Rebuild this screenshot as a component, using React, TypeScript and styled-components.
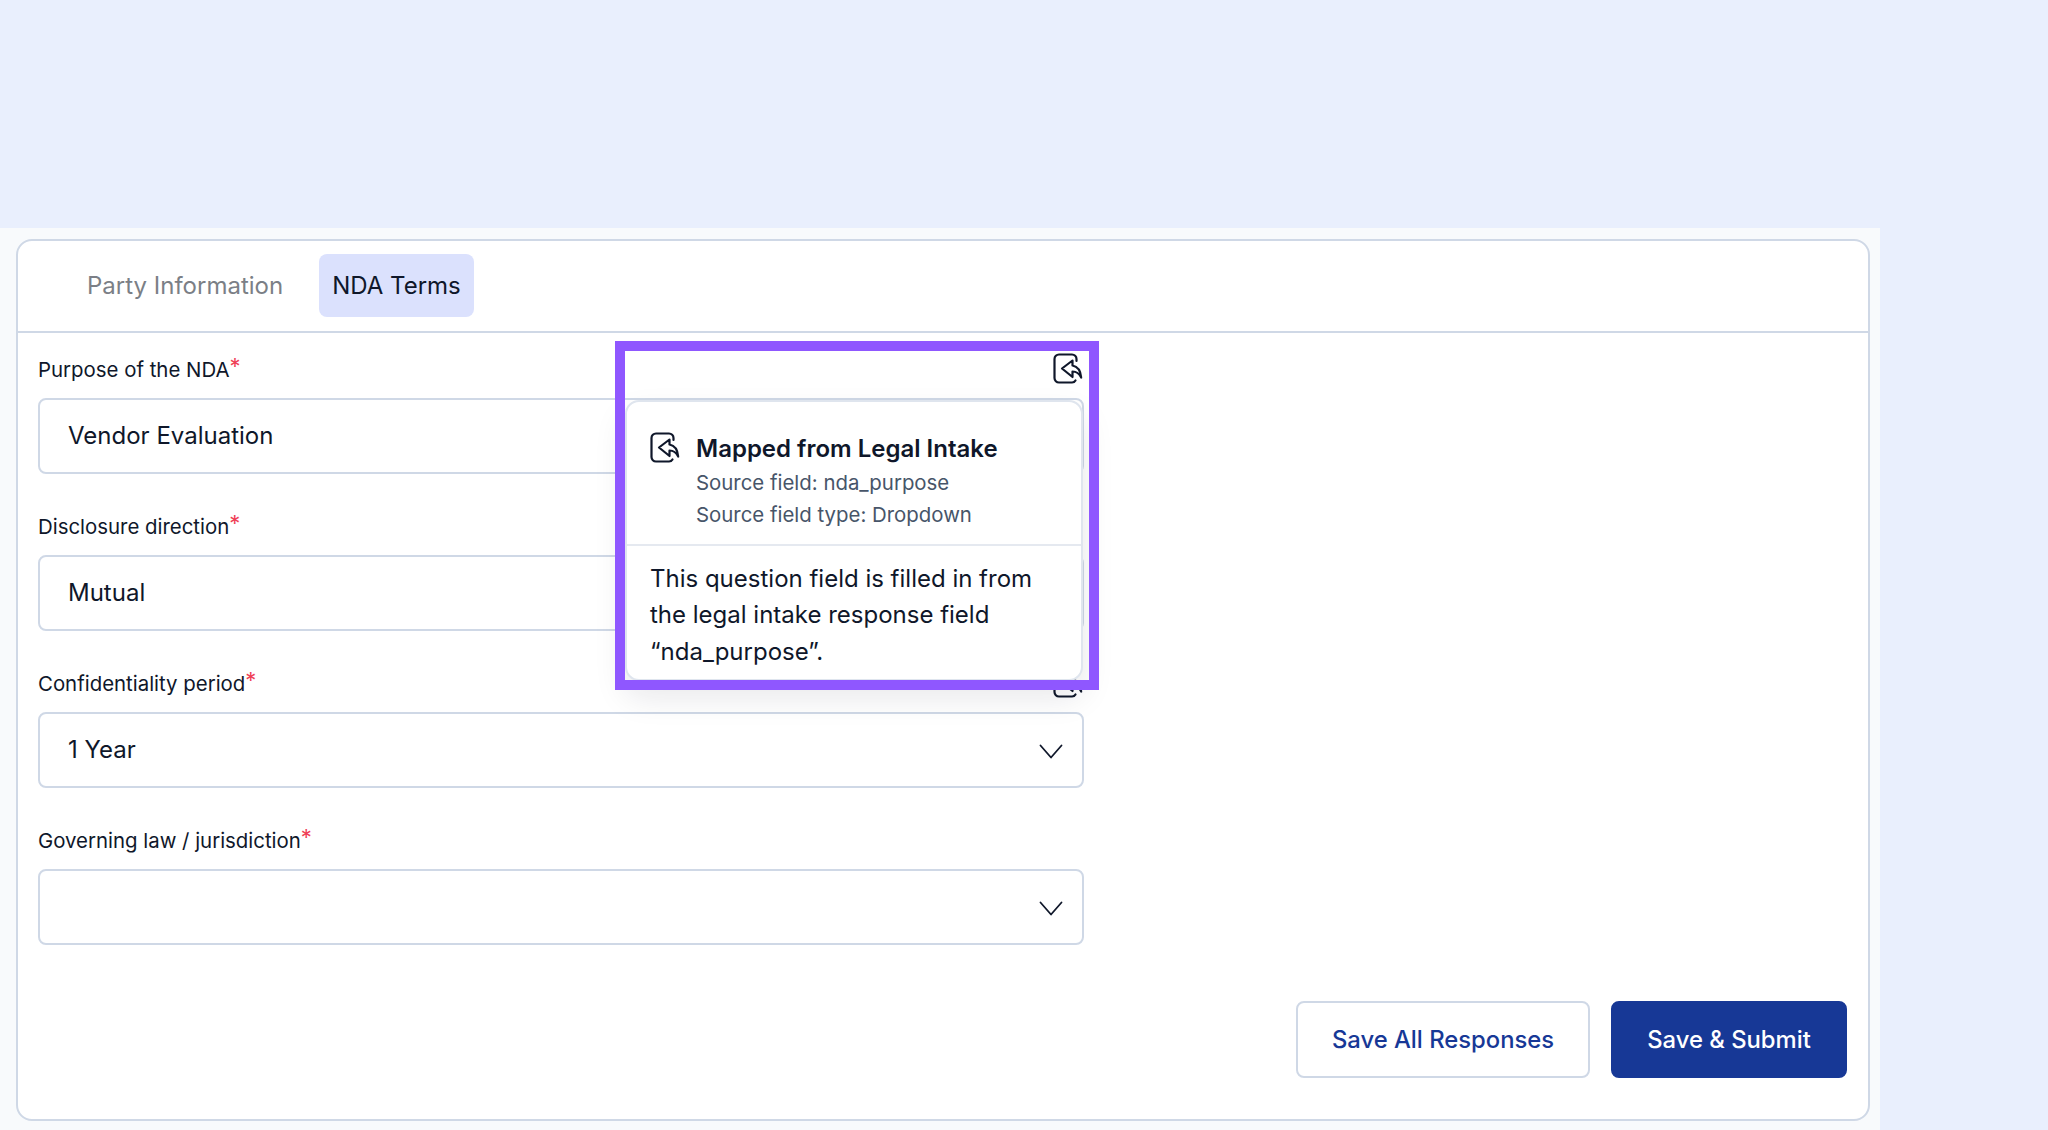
import * as React from 'react';
import styled, { createGlobalStyle } from 'styled-components';

const GlobalStyle = createGlobalStyle`
  html, body {
    margin: 0;
    padding: 0;
    background: #e9effd;
    font-family: Inter, 'Noto Sans', sans-serif;
    color: #0f172a;
  }
  * {
    box-sizing: border-box;
  }
`;

const Page = styled.div`
  width: 2048px;
  height: 1130px;
  overflow: hidden;
  padding-top: 228px;
`;

const Main = styled.div`
  width: 1880px;
  height: 902px;
  background: #f8fafc;
  padding: 11px 10px 10px 16px;
`;

const Card = styled.div`
  height: 882px;
  background: #fff;
  border: 2px solid #cfd8e6;
  border-radius: 16px;
`;

const TabBar = styled.div`
  display: flex;
  gap: 22px;
  height: 92px;
  padding: 13px 0 0 55.5px;
  border-bottom: 2px solid #cfd8e6;
`;

const Tab = styled.div<{ $active?: boolean }>`
  height: 63px;
  padding: 0 13.5px;
  display: flex;
  align-items: center;
  font-size: 24px;
  border-radius: 8px;
  color: ${(p) => (p.$active ? '#0f172a' : '#7b7f86')};
  background: ${(p) => (p.$active ? '#dbe1fd' : 'transparent')};
`;

const Form = styled.div`
  padding: 20px 21px 0 20px;
`;

const Fields = styled.div`
  width: 1046px;
  display: flex;
  flex-direction: column;
  gap: 36px;
`;

const Field = styled.div`
  position: relative;
`;

const LabelRow = styled.div`
  height: 31px;
  display: flex;
  justify-content: space-between;
  align-items: center;
  margin-bottom: 14px;
`;

const Label = styled.div`
  font-size: 20.4px;
  padding-top: 1px;
  color: #0f172a;
`;

const Star = styled.span`
  color: #ef3f56;
  font-size: 22px;
  position: relative;
  top: -3px;
`;

const Select = styled.div`
  height: 76px;
  display: flex;
  align-items: center;
  padding: 0 19px 0 28px;
  border: 2px solid #cfd8e6;
  border-radius: 8px;
  font-size: 24px;
  color: #0f172a;
`;

const SelectValue = styled.span`
  flex: 1;
  margin-top: -2px;
`;

const ChevronSlot = styled.span`
  display: flex;
  margin-top: 3px;
`;

const Popover = styled.div`
  position: absolute;
  z-index: 2;
  top: 47px;
  left: 587px;
  width: 458px;
  height: 281px;
  background: #fff;
  border: 2px solid #dfe5ee;
  border-radius: 14px;
  box-shadow: 0 16px 32px rgba(15, 23, 42, 0.1);
`;

const PopoverHead = styled.div`
  display: flex;
  gap: 15px;
  height: 144px;
  padding: 31px 24px 0 23px;
  border-bottom: 2px solid #e5e9f0;
`;

const PopoverIcon = styled.div`
  margin-top: -1px;
  height: 31px;
`;

const PopoverTitle = styled.div`
  font-size: 24px;
  font-weight: 600;
  line-height: 32px;
  color: #0f172a;
  margin-bottom: 2px;
`;

const PopoverSub = styled.div`
  font-size: 20.4px;
  line-height: 31.5px;
  color: #475569;
`;

const PopoverBody = styled.div`
  padding: 14.5px 24px 0 23px;
  font-size: 24px;
  line-height: 36.5px;
  color: #0f172a;
`;

const Highlight = styled.div`
  position: absolute;
  z-index: 3;
  top: -12px;
  left: 577px;
  width: 484px;
  height: 349px;
  border: 10px solid #8f57ff;
  pointer-events: none;
`;

const Footer = styled.div`
  display: flex;
  justify-content: flex-end;
  gap: 21px;
  margin-top: 56px;
`;

const Button = styled.div<{ $primary?: boolean }>`
  height: 77px;
  display: flex;
  align-items: center;
  justify-content: center;
  font-size: 23.8px;
  font-weight: 500;
  border-radius: 8px;
  width: ${(p) => (p.$primary ? '236px' : '294px')};
  color: ${(p) => (p.$primary ? '#fff' : '#173896')};
  background: ${(p) => (p.$primary ? '#173896' : '#fff')};
  border: 2px solid ${(p) => (p.$primary ? '#173896' : '#cfd8e6')};
`;

const MappedIcon = () => (
  <svg width="31" height="31" viewBox="0 0 31 31" fill="none" stroke="#0f172a" strokeWidth="2.2" strokeLinecap="round" strokeLinejoin="round">
    <path d="M23.500 8V6A4.500 4.500 0 0 0 19 1.500H6A4.500 4.500 0 0 0 1.500 6v19A4.500 4.500 0 0 0 6 29.500h13a4 4 0 0 0 3.500-2" />
    <path d="M19.500 7.500L9 15.500l10.500 8.500v-5.500c3.500 0 6.500 1.500 8.700 6-.5-6-3.500-11-8.700-12z" />
  </svg>
);

const Chevron = () => (
  <svg width="24" height="15" viewBox="0 0 24 15" fill="none" stroke="#0f172a" strokeWidth="1.800" strokeLinecap="round" strokeLinejoin="round">
    <path d="M1.500 1.500L12 13.500 22.500 1.500" />
  </svg>
);

const fields = [
  { label: 'Purpose of the NDA', value: 'Vendor Evaluation' },
  { label: 'Disclosure direction', value: 'Mutual' },
  { label: 'Confidentiality period', value: '1 Year' },
  { label: 'Governing law / jurisdiction', value: '' },
];

const App: React.FC = () => (
  <Page>
    <GlobalStyle />
    <Main>
      <Card>
        <TabBar>
          <Tab>Party Information</Tab>
          <Tab $active>NDA Terms</Tab>
        </TabBar>
        <Form>
          <Fields>
            {fields.map((f, i) => (
              <Field key={f.label}>
                <LabelRow>
                  <Label>
                    {f.label}
                    <Star>*</Star>
                  </Label>
                  {i < 3 && <MappedIcon />}
                </LabelRow>
                <Select>
                  <SelectValue>{f.value}</SelectValue>
                  <ChevronSlot>
                    <Chevron />
                  </ChevronSlot>
                </Select>
                {i === 0 && (
                  <>
                    <Popover>
                      <PopoverHead>
                        <PopoverIcon>
                          <MappedIcon />
                        </PopoverIcon>
                        <div>
                          <PopoverTitle>Mapped from Legal Intake</PopoverTitle>
                          <PopoverSub>Source field: nda_purpose</PopoverSub>
                          <PopoverSub>Source field type: Dropdown</PopoverSub>
                        </div>
                      </PopoverHead>
                      <PopoverBody>
                        This question field is filled in from the legal intake response field “nda_purpose”.
                      </PopoverBody>
                    </Popover>
                    <Highlight />
                  </>
                )}
              </Field>
            ))}
          </Fields>
          <Footer>
            <Button>Save All Responses</Button>
            <Button $primary>Save &amp; Submit</Button>
          </Footer>
        </Form>
      </Card>
    </Main>
  </Page>
);

export default App;
